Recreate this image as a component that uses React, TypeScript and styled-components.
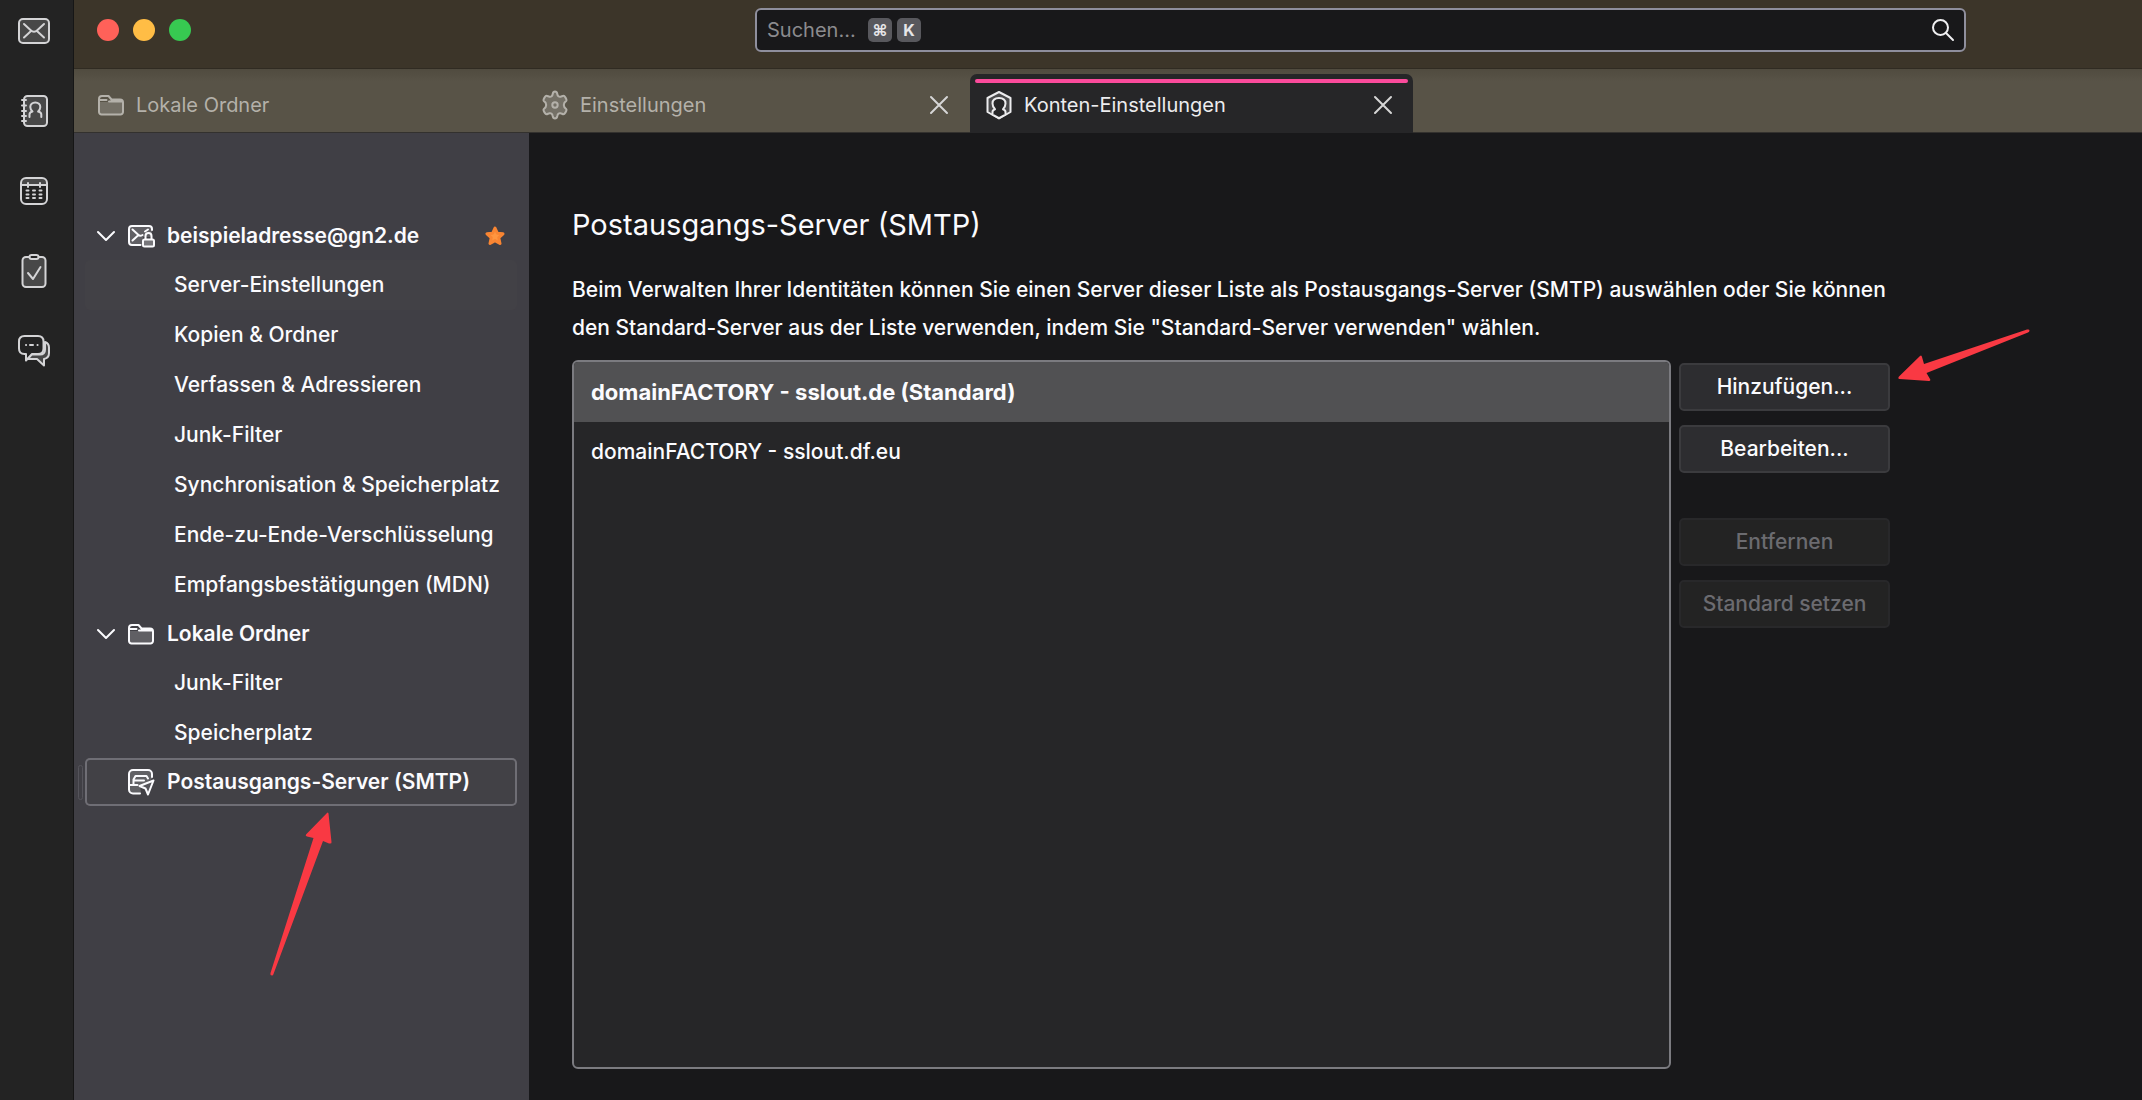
import React from "react";
import styled, { createGlobalStyle, css } from "styled-components";

const Global = createGlobalStyle`
  *, *::before, *::after { box-sizing: border-box; }
  html, body { margin: 0; background: #18181a; }
  body { font-family: Inter, "Liberation Sans", sans-serif; font-size: 21px; line-height: 28px; color: #fbfbfe; }
  button, input { font: inherit; color: inherit; margin: 0; }
  button { border: 0; padding: 0; background: none; cursor: pointer; }
  svg { display: block; flex: none; }
`;

const Window = styled.div`
  display: flex;
  min-height: 100vh;
`;

const Spaces = styled.nav`
  flex: 0 0 74px;
  display: flex;
  flex-direction: column;
  align-items: center;
  gap: 40px;
  padding: 11px 6px 0 0;
  background: #232323;
  border-right: 1px solid #161616;
`;

const SpaceButton = styled.button`
  width: 40px;
  height: 40px;
  display: grid;
  place-items: center;
  color: #d4d4d6;
`;

const Shell = styled.div`
  flex: 1;
  min-width: 0;
  display: flex;
  flex-direction: column;
`;

const TitleBar = styled.header`
  display: flex;
  align-items: center;
  height: 69px;
  padding: 0 176px 8px 23px;
  background: #3c3529;
  border-bottom: 1px solid #302b22;
`;

const Lights = styled.div`
  display: flex;
  gap: 14px;
  flex: 1 1 658px;
`;

const Light = styled.button<{ $color: string }>`
  width: 22px;
  height: 22px;
  border-radius: 50%;
  background: ${(p) => p.$color};
`;

const SearchBox = styled.form`
  flex: 1 1 1211px;
  display: flex;
  align-items: center;
  height: 44px;
  padding: 0 9px 0 10px;
  border: 2px solid #8f8f9d;
  border-radius: 6px;
  background: #18181a;
`;

const SearchInput = styled.input`
  width: 101px;
  padding: 0;
  border: 0;
  outline: 0;
  background: transparent;
  font-size: 20px;
  &::placeholder { color: #8b8b8e; opacity: 1; }
`;

const Key = styled.kbd`
  display: grid;
  place-items: center;
  width: 24px;
  height: 24px;
  margin-right: 5px;
  border-radius: 5px;
  background: #58585d;
  color: #e6e6e8;
  font-family: inherit;
  font-size: 16px;
  line-height: 20px;
  font-weight: 700;
`;

const SearchButton = styled.button`
  margin-left: auto;
  color: #f0f0f2;
`;

const TabBar = styled.div`
  display: flex;
  align-items: flex-end;
  gap: 1px;
  height: 64px;
  padding: 0 8px;
  background: linear-gradient(#504b3f, #585347 12px);
  border-bottom: 1px solid #33312e;
`;

const Tab = styled.div<{ $active?: boolean }>`
  position: relative;
  display: flex;
  align-items: center;
  gap: 11px;
  flex: 0 1 443px;
  height: 58px;
  padding: 4px 18px 0 15px;
  color: #b4b1aa;
  ${(p) =>
    p.$active &&
    css`
      margin-bottom: -1px;
      padding-bottom: 1px;
      height: 59px;
      background: #262628;
      color: #ececee;
      border-radius: 7px 7px 0 0;
      &::before {
        content: "";
        position: absolute;
        top: 5px;
        left: 5px;
        right: 5px;
        height: 4px;
        border-radius: 2px;
        background: #fb4b9c;
      }
    `}
`;

const TabLabel = styled.button`
  flex: 1;
  min-width: 0;
  text-align: left;
  white-space: nowrap;
  font-size: 20px;
`;

const CloseButton = styled.button`
  width: 24px;
  height: 24px;
  display: grid;
  place-items: center;
  color: #d6d6d6;
`;

const Body = styled.div`
  flex: 1;
  display: flex;
`;

const Sidebar = styled.aside`
  flex: 0 0 455px;
  padding: 79px 12px 0 11px;
  background: #403f45;
`;

const List = styled.ul`
  list-style: none;
  margin: 0;
  padding: 0;
`;

const Account = styled.button<{ $selected?: boolean }>`
  position: relative;
  display: flex;
  align-items: center;
  width: 100%;
  height: 48px;
  padding: 0 12px;
  gap: 12px;
  border-radius: 5px;
  font-weight: 600;
  text-align: left;
  white-space: nowrap;
  ${(p) =>
    p.$selected &&
    css`
      background: #424146;
      box-shadow: inset 0 0 0 2px #6f6e75;
      &::before {
        content: "";
        position: absolute;
        left: -7px;
        top: 7px;
        width: 5px;
        height: 35px;
        border: 1px solid #55545b;
        border-radius: 3px;
      }
    `}
`;

const AccountName = styled.span`
  flex: 1;
`;

const Twisty = styled.span`
  width: 18px;
`;

const Entry = styled.button<{ $hover?: boolean }>`
  display: block;
  width: 100%;
  height: 50px;
  padding: 0 0 0 89px;
  border-radius: 5px;
  font-weight: 500;
  text-align: left;
  white-space: nowrap;
  background: ${(p) => (p.$hover ? "#424146" : "transparent")};
`;

const Main = styled.main`
  flex: 1;
  min-width: 0;
  display: flex;
  padding: 72px 40px 31px 43px;
`;

const Pane = styled.section`
  flex: 0 1 1318px;
  display: flex;
  flex-direction: column;
`;

const Heading = styled.h1`
  margin: 0 0 26px;
  font-size: 29px;
  line-height: 40px;
  font-weight: 400;
`;

const Intro = styled.p`
  margin: 0 0 13px;
  line-height: 38px;
  font-weight: 500;
`;

const Servers = styled.div`
  flex: 1;
  display: flex;
  gap: 8px;
`;

const ServerList = styled.ul`
  flex: 1;
  margin: 0;
  padding: 0;
  list-style: none;
  border: 2px solid #7b7b80;
  border-radius: 6px;
  background: #262628;
  overflow: hidden;
`;

const Server = styled.li<{ $selected?: boolean }>`
  padding: 16px 17px;
  font-size: ${(p) => (p.$selected ? 22 : 21)}px;
  font-weight: ${(p) => (p.$selected ? 700 : 500)};
  background: ${(p) => (p.$selected ? "#515153" : "transparent")};
`;

const Actions = styled.div`
  flex: 0 0 211px;
  display: flex;
  flex-direction: column;
  gap: 14px;
  padding-top: 3px;
`;

const Action = styled.button<{ $apart?: boolean }>`
  position: relative;
  height: 48px;
  margin-top: ${(p) => (p.$apart ? 31 : 0)}px;
  border: 2px solid #3b3b3e;
  border-radius: 5px;
  background: #2d2d30;
  font-weight: 500;
  &:disabled {
    color: #6b6b70;
    background: #232323;
    border-color: #28282a;
    cursor: default;
  }
`;

const ArrowUp = styled.svg`
  position: absolute;
  left: 184px;
  top: 54px;
  pointer-events: none;
`;

const ArrowLeft = styled.svg`
  position: absolute;
  left: calc(100% + 10px);
  top: -37px;
  pointer-events: none;
`;

const line = {
  fill: "none",
  stroke: "currentColor",
  strokeWidth: 2,
  strokeLinecap: "round" as const,
  strokeLinejoin: "round" as const,
};
const SHADE = "#ffffff2b";

const MailIcon = () => (
  <svg width="34" height="28" viewBox="0 0 34 28" {...line}>
    <rect x="2" y="2" width="30" height="24" rx="4" fill={SHADE} />
    <path d="M7 7l7 6.5c1.500 1.500 4.500 1.500 6 0L27 7M7 20.500l6.500-6M27 20.500l-6.500-6" />
  </svg>
);

const AddressIcon = () => (
  <svg width="30" height="34" viewBox="0 0 30 34" {...line}>
    <rect x="5" y="2" width="23" height="30" rx="3.500" fill={SHADE} />
    <path d="M3 6h4M3 11.500h4M3 17h4M3 22h4M3 27h4" />
    <path d="M10.500 23v-2.500c0-1.500 1-2.500 3-3C11.800 16 11.300 14.500 11.300 13c0-2.600 2-4.500 5-4.500s5 1.900 5 4.500c0 1.500-.6 3-2.200 4.500 2.200.5 3.200 1.500 3.200 3V23" />
  </svg>
);

const CalendarIcon = () => (
  <svg width="30" height="30" viewBox="0 0 30 30" {...line}>
    <path d="M2 9V7a5 5 0 015-5h16a5 5 0 015 5v2z" fill={SHADE} stroke="none" />
    <rect x="2" y="2" width="26" height="26" rx="5" />
    <path d="M2 9h26M9 7v4M21 7v4" />
    <path d="M7.500 14.500h2M14 14.500h2M20.500 14.500h2M7.500 18.500h2M14 18.500h2M20.500 18.500h2M7.500 22h2M14 22h2M20.500 22h2" />
  </svg>
);

const TasksIcon = () => (
  <svg width="28" height="36" viewBox="0 0 28 36" {...line}>
    <rect x="2.500" y="4" width="23" height="30" rx="3.500" fill={SHADE} />
    <rect x="9.500" y="2" width="9" height="4" rx="2" fill="#232323" />
    <path d="M8 20l5 6 7.500-12" />
  </svg>
);

const ChatIcon = () => (
  <svg width="34" height="34" viewBox="0 0 34 34" {...line}>
    <path d="M28 8c2.500 1 4 2.600 4 5.500v5.500c0 3.600-1.500 5.300-5 6V31.500L20 25h-6l-3.500 0 4-4.500H23c3.500 0 5-2 5-5z" fill={SHADE} />
    <path d="M7.500 2H21c3.500 0 5.500 2 5.500 5.500v7c0 3.500-2 5.500-5.500 5.500h-6l-6 6.500V20H7.500C4 20 2 18 2 14.500v-7C2 4 4 2 7.500 2z" fill="#232323" />
    <path d="M9 11h.1M13 11h3M20.500 11h.1" />
  </svg>
);

const FolderIcon = () => (
  <svg width="28" height="24" viewBox="0 0 28 24" {...line}>
    <path d="M2 9h8l4-2h12v12a3 3 0 01-3 3H5a3 3 0 01-3-3z" fill={SHADE} stroke="none" />
    <path d="M2 6a3 3 0 013-3h6.500l3 3.500H23a3 3 0 013 3V19a2.500 2.500 0 01-2.500 2.500h-19A2.500 2.500 0 012 19zM2 7h6l1.500 0M12 8.500h13" />
  </svg>
);

const GearIcon = () => (
  <svg width="28" height="30" viewBox="0 0 28 30" {...line}>
    <path
      d="M14 1.500c1.500 0 2 .8 2.300 2.500.3 2 1.500 3 3.200 2.700 1.200-.2 2-.9 3-.9 1.200 0 3.200 3.400 3 4.600-.2 1-1.700 1.600-2.200 2.600-.6 1.200-.6 2.800 0 4 .5 1 2 1.600 2.200 2.600.2 1.200-1.800 4.600-3 4.600-1 0-1.800-.7-3-.9-1.700-.3-2.900.7-3.200 2.700-.3 1.700-.8 2.500-2.300 2.500s-2-.8-2.300-2.500c-.3-2-1.500-3-3.200-2.700-1.200.2-2 .9-3 .9-1.200 0-3.200-3.400-3-4.600.2-1 1.700-1.600 2.200-2.600.6-1.200.6-2.800 0-4-.5-1-2-1.600-2.200-2.600-.2-1.200 1.800-4.600 3-4.600 1 0 1.800.7 3 .9 1.700.3 2.900-.7 3.200-2.700.3-1.700.8-2.500 2.300-2.500z"
      fill={SHADE}
    />
    <circle cx="14" cy="15" r="2.700" />
  </svg>
);

const AccountIcon = () => (
  <svg width="28" height="30" viewBox="0 0 28 30" {...line}>
    <path d="M14 2l11.500 6v14L14 28.500 2.500 22V8z" fill={SHADE} />
    <path d="M7.500 24.500v-2.500c0-1.500 1-2.200 2.500-2.700C8.300 17.500 7.500 15.500 7.500 13.500 7.500 10 10 8 14 8s6.500 2 6.500 5.500c0 2-.8 4-2.500 5.800 1.500.5 2.500 1.200 2.500 2.700v2.500L14 28.200z" fill="#262628" />
  </svg>
);

const CloseIcon = () => (
  <svg width="20" height="20" viewBox="0 0 20 20" {...line}>
    <path d="M2 2l16 16M18 2L2 18" />
  </svg>
);

const SearchIcon = () => (
  <svg width="24" height="24" viewBox="0 0 24 24" {...line}>
    <circle cx="9.500" cy="9.500" r="7.500" />
    <path d="M15 15l7 7" />
  </svg>
);

const ChevronIcon = () => (
  <svg width="18" height="12" viewBox="0 0 18 12" {...line}>
    <path d="M1 2l8 8 8-8" />
  </svg>
);

const SecureMailIcon = () => (
  <svg width="28" height="24" viewBox="0 0 28 24" {...line}>
    <path d="M2 5a3 3 0 013-3h17a3 3 0 013 3v8H16v8H5a3 3 0 01-3-3z" fill={SHADE} stroke="none" />
    <path d="M13.500 21H5a3 3 0 01-3-3V5a3 3 0 013-3h17a3 3 0 013 3v1" />
    <path d="M5.500 5.500l6 5.500-6 5.500M11.500 11c1.500 1.500 2.500 1 4 0M18 7.500l3-2" />
    <path d="M18.500 15v-3a3 3 0 016 0v3" />
    <rect x="16" y="15.500" width="11" height="7" rx="1.500" fill="#77767b" />
  </svg>
);

const OutgoingIcon = () => (
  <svg width="28" height="28" viewBox="0 0 28 28" {...line}>
    <path d="M2 6a4 4 0 014-4h15a4 4 0 014 4v5l-12 7 1 7H6a4 4 0 01-4-4z" fill={SHADE} stroke="none" />
    <path d="M13 25.500H6a4 4 0 01-4-4V6a4 4 0 014-4h15a4 4 0 014 4v3" />
    <path d="M2 17h4.500v-5.500l2-3.500h11l1.500 2.500M7 12.500h10M6.500 17h4" />
    <path d="M26.500 12.500L12.500 18l6 2.500 2.500 6z" fill="#55545a" />
  </svg>
);

const StarIcon = () => (
  <svg width="20" height="20" viewBox="0 0 20 20">
    <path
      d="M10 2l2.300 5.200 5.700.6-4.200 3.900 1.200 5.800-5-2.900-5 2.900 1.200-5.800L2 7.800l5.700-.6z"
      fill="#ff9640"
      stroke="#f98532"
      strokeWidth="3"
      strokeLinejoin="round"
    />
  </svg>
);

const spaces = [
  { label: "E-Mail", icon: <MailIcon /> },
  { label: "Adressbuch", icon: <AddressIcon /> },
  { label: "Kalender", icon: <CalendarIcon /> },
  { label: "Aufgaben", icon: <TasksIcon /> },
  { label: "Chat", icon: <ChatIcon /> },
];

const mailEntries = [
  "Server-Einstellungen",
  "Kopien & Ordner",
  "Verfassen & Adressieren",
  "Junk-Filter",
  "Synchronisation & Speicherplatz",
  "Ende-zu-Ende-Verschlüsselung",
  "Empfangsbestätigungen (MDN)",
];

const localEntries = ["Junk-Filter", "Speicherplatz"];

export default function App() {
  return (
    <Window>
      <Global />
      <Spaces>
        {spaces.map((s) => (
          <SpaceButton key={s.label} aria-label={s.label}>
            {s.icon}
          </SpaceButton>
        ))}
      </Spaces>
      <Shell>
        <TitleBar>
          <Lights>
            <Light $color="#ff6159" aria-label="Schließen" />
            <Light $color="#ffbd45" aria-label="Minimieren" />
            <Light $color="#37c951" aria-label="Maximieren" />
          </Lights>
          <SearchBox role="search">
            <SearchInput type="text" aria-label="Suchen" placeholder="Suchen..." />
            <Key>⌘</Key>
            <Key>K</Key>
            <SearchButton type="button" aria-label="Suche starten">
              <SearchIcon />
            </SearchButton>
          </SearchBox>
        </TitleBar>
        <TabBar>
          <Tab>
            <FolderIcon />
            <TabLabel>Lokale Ordner</TabLabel>
          </Tab>
          <Tab>
            <GearIcon />
            <TabLabel>Einstellungen</TabLabel>
            <CloseButton aria-label="Tab schließen">
              <CloseIcon />
            </CloseButton>
          </Tab>
          <Tab $active>
            <AccountIcon />
            <TabLabel>Konten-Einstellungen</TabLabel>
            <CloseButton aria-label="Tab schließen">
              <CloseIcon />
            </CloseButton>
          </Tab>
        </TabBar>
        <Body>
          <Sidebar>
            <List>
              <li>
                <Account>
                  <Twisty>
                    <ChevronIcon />
                  </Twisty>
                  <SecureMailIcon />
                  <AccountName>beispieladresse@gn2.de</AccountName>
                  <StarIcon />
                </Account>
                <List>
                  {mailEntries.map((name, i) => (
                    <li key={name}>
                      <Entry $hover={i === 0}>{name}</Entry>
                    </li>
                  ))}
                </List>
              </li>
              <li>
                <Account>
                  <Twisty>
                    <ChevronIcon />
                  </Twisty>
                  <FolderIcon />
                  <AccountName>Lokale Ordner</AccountName>
                </Account>
                <List>
                  {localEntries.map((name) => (
                    <li key={name}>
                      <Entry>{name}</Entry>
                    </li>
                  ))}
                </List>
              </li>
              <li>
                <Account $selected>
                  <Twisty />
                  <OutgoingIcon />
                  <AccountName>Postausgangs-Server (SMTP)</AccountName>
                  <ArrowUp width="64" height="166" viewBox="0 0 64 166" fill="#f93943">
                    <path d="M58 1L37 22.500Q36 24 38 24.500L44.500 26 1.500 161Q1 163.500 3 163.500 4 163.500 4.500 162L54 29l6 2.500Q63 32 62.500 30L59.500 1.500Q59 0 58 1z" />
                  </ArrowUp>
                </Account>
              </li>
            </List>
          </Sidebar>
          <Main>
            <Pane>
              <Heading>Postausgangs-Server (SMTP)</Heading>
              <Intro>
                Beim Verwalten Ihrer Identitäten können Sie einen Server dieser Liste als
                Postausgangs-Server (SMTP) auswählen oder Sie können den Standard-Server aus
                der Liste verwenden, indem Sie "Standard-Server verwenden" wählen.
              </Intro>
              <Servers>
                <ServerList>
                  <Server $selected>domainFACTORY - sslout.de (Standard)</Server>
                  <Server>domainFACTORY - sslout.df.eu</Server>
                </ServerList>
                <Actions>
                  <Action>
                    Hinzufügen...
                    <ArrowLeft width="134" height="56" viewBox="0 0 134 56" fill="#f93943">
                      <path d="M1 48.500L22 28Q23.500 26.500 24 29L26 36 129 1.500Q131.500 1 131.500 2.500 131.500 4 130 4.500L28.500 45 32 51Q33 53 31 53L1.500 51Q-.5 50.500 1 48.500z" />
                    </ArrowLeft>
                  </Action>
                  <Action>Bearbeiten...</Action>
                  <Action $apart disabled>
                    Entfernen
                  </Action>
                  <Action disabled>Standard setzen</Action>
                </Actions>
              </Servers>
            </Pane>
          </Main>
        </Body>
      </Shell>
    </Window>
  );
}
